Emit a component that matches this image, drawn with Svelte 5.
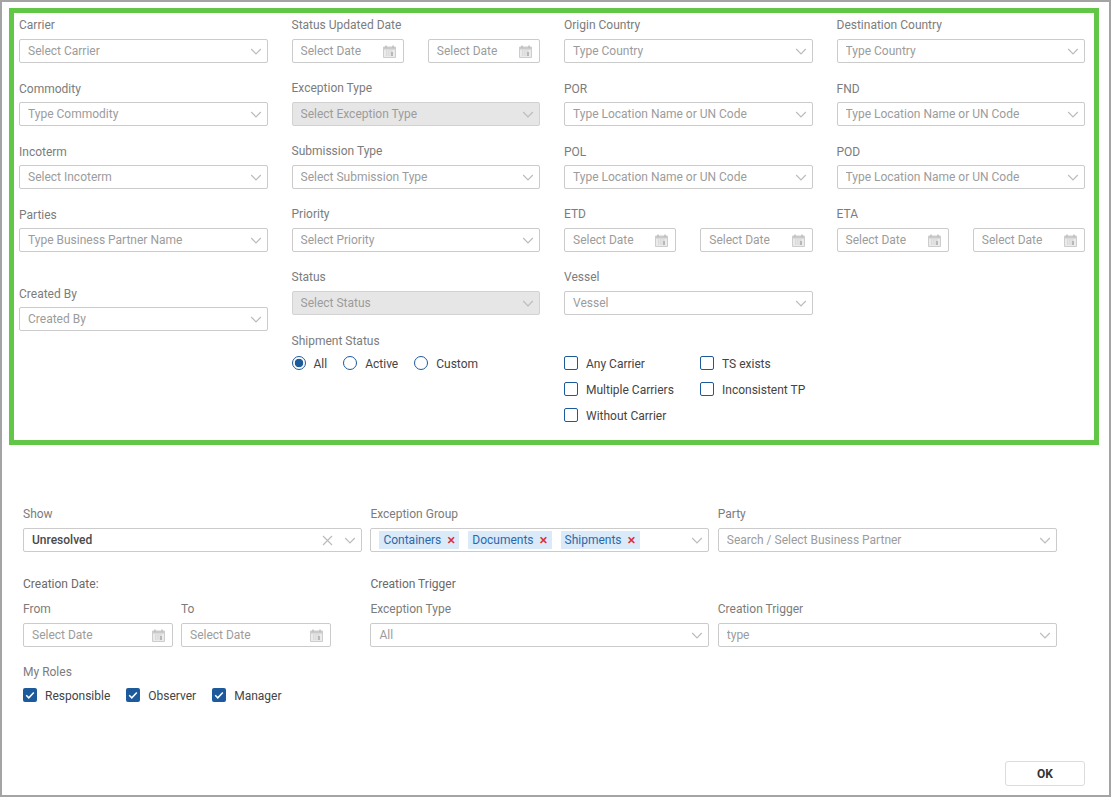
<script lang="ts">
	const filterColumns = [
		[
			{ label: 'Carrier', placeholder: 'Select Carrier' },
			{ label: 'Commodity', placeholder: 'Type Commodity', low: true },
			{ label: 'Incoterm', placeholder: 'Select Incoterm', low: true },
			{ label: 'Parties', placeholder: 'Type Business Partner Name', low: true },
			{ label: 'Created By', placeholder: 'Created By', low: true, pushed: true }
		],
		[
			{ label: 'Status Updated Date', date: true },
			{ label: 'Exception Type', placeholder: 'Select Exception Type', disabled: true },
			{ label: 'Submission Type', placeholder: 'Select Submission Type' },
			{ label: 'Priority', placeholder: 'Select Priority' },
			{ label: 'Status', placeholder: 'Select Status', disabled: true }
		],
		[
			{ label: 'Origin Country', placeholder: 'Type Country' },
			{ label: 'POR', placeholder: 'Type Location Name or UN Code', low: true },
			{ label: 'POL', placeholder: 'Type Location Name or UN Code', low: true },
			{ label: 'ETD', date: true },
			{ label: 'Vessel', placeholder: 'Vessel' }
		],
		[
			{ label: 'Destination Country', placeholder: 'Type Country' },
			{ label: 'FND', placeholder: 'Type Location Name or UN Code', low: true },
			{ label: 'POD', placeholder: 'Type Location Name or UN Code', low: true },
			{ label: 'ETA', date: true }
		]
	];

	const radios = ['All', 'Active', 'Custom'];
	const carrierChecks = ['Any Carrier', 'TS exists', 'Multiple Carriers', 'Inconsistent TP', 'Without Carrier'];
	const chips = ['Containers', 'Documents', 'Shipments'];
	const roles = ['Responsible', 'Observer', 'Manager'];
</script>

{#snippet chevron()}
	<svg class="chevron" width="12" height="7" viewBox="0 0 12 7" fill="none" stroke="#bcbcbc" stroke-width="1.2">
		<path d="M1.2 1l4.8 4.8 4.8-4.8" />
	</svg>
{/snippet}

{#snippet select(placeholder, disabled = false)}
	<div class="input" class:disabled>
		<span class="placeholder">{placeholder}</span>
		{@render chevron()}
	</div>
{/snippet}

{#snippet dateInput()}
	<div class="input date">
		<span class="placeholder">Select Date</span>
		<svg class="calendar" width="13" height="13" viewBox="0 0 13 13">
			<path d="M0.5 2h12v10.5h-12z" fill="#ebebeb" stroke="#cdcdcd" />
			<path d="M1 2h11v2.5H1z" fill="#cacaca" />
			<path d="M3 0.5v2.5M10 0.5v2.5" stroke="#bdbdbd" stroke-width="1.4" />
			<path d="M3 6h7M3 8h7M3 10h7" stroke="#c8c8c8" stroke-dasharray="1.4 0.8" />
			<path d="M8 7h2v4H8z" fill="#b8b8b8" />
		</svg>
	</div>
{/snippet}

{#snippet checkbox(label, checked = false)}
	<label class="check">
		<span class="box" class:checked>
			{#if checked}
				<svg width="14" height="14" viewBox="0 0 14 14" fill="none" stroke="#fff" stroke-width="1.5">
					<path d="M3.2 7.2l2.6 2.6 5-5.4" />
				</svg>
			{/if}
		</span>
		{label}
	</label>
{/snippet}

<div class="window">
	<section class="filters">
		{#each filterColumns as column, i}
			<div class="column">
				{#each column as field}
					<div class="field" class:low={field.low} class:pushed={field.pushed}>
						<span class="label">{field.label}</span>
						{#if field.date}
							<div class="date-pair">
								{@render dateInput()}
								{@render dateInput()}
							</div>
						{:else}
							{@render select(field.placeholder, field.disabled)}
						{/if}
					</div>
				{/each}

				{#if i === 1}
					<div class="field shipment">
						<span class="label">Shipment Status</span>
						<div class="radios">
							{#each radios as radio, r}
								<label class="check">
									<span class="radio" class:on={r === 0}></span>
									{radio}
								</label>
							{/each}
						</div>
					</div>
				{/if}

				{#if i === 2}
					<div class="carrier-checks">
						{#each carrierChecks as item}
							{@render checkbox(item)}
						{/each}
					</div>
				{/if}
			</div>
		{/each}
	</section>

	<section class="details">
		<div class="detail-row">
			<div class="field">
				<span class="label">Show</span>
				<div class="input">
					<span class="value">Unresolved</span>
					<svg class="clear" width="11" height="11" viewBox="0 0 11 11" fill="none" stroke="#bcbcbc" stroke-width="1.2">
						<path d="M1 1l9 9M10 1l-9 9" />
					</svg>
					{@render chevron()}
				</div>
			</div>
			<div class="field">
				<span class="label">Exception Group</span>
				<div class="input">
					<div class="chips">
						{#each chips as chip}
							<span class="chip">{chip}<span class="chip-x">×</span></span>
						{/each}
					</div>
					{@render chevron()}
				</div>
			</div>
			<div class="field">
				<span class="label">Party</span>
				{@render select('Search / Select Business Partner')}
			</div>
		</div>

		<div class="detail-row second">
			<div class="field">
				<span class="label heading">Creation Date:</span>
				<div class="range">
					<div class="field">
						<span class="label">From</span>
						{@render dateInput()}
					</div>
					<div class="field">
						<span class="label">To</span>
						{@render dateInput()}
					</div>
				</div>
			</div>
			<div class="field">
				<span class="label heading">Creation Trigger</span>
				<div class="field">
					<span class="label">Exception Type</span>
					{@render select('All')}
				</div>
			</div>
			<div class="field">
				<span class="label heading">&nbsp;</span>
				<div class="field">
					<span class="label">Creation Trigger</span>
					{@render select('type')}
				</div>
			</div>
		</div>

		<div class="roles-block">
			<span class="label">My Roles</span>
			<div class="roles">
				{#each roles as role}
					{@render checkbox(role, true)}
				{/each}
			</div>
		</div>
	</section>

	<footer class="footer">
		<button class="ok" type="button">OK</button>
	</footer>
</div>

<style>
	:global(body) {
		margin: 0;
		background: #fff;
	}

	.window {
		box-sizing: border-box;
		display: flex;
		flex-direction: column;
		height: 797px;
		border: 2px solid #a4a4a4;
		padding-top: 6px;
		font-family: Roboto, 'Liberation Sans', sans-serif;
		font-size: 12px;
		color: #444;
	}

	.filters {
		box-sizing: border-box;
		display: grid;
		grid-template-columns: repeat(4, 1fr);
		column-gap: 24px;
		width: 1090px;
		height: 437px;
		margin-left: 7px;
		border: 5px solid #62c646;
		padding: 3px 9px 0 5px;
	}

	.column {
		display: flex;
		flex-direction: column;
		gap: 16px;
		min-width: 0;
	}

	.field {
		display: flex;
		flex-direction: column;
		gap: 7px;
		min-width: 0;
	}

	.field.low {
		gap: 6px;
		padding-top: 1px;
	}

	.field.pushed {
		margin-top: 16px;
	}

	.field.shipment {
		margin-top: 1px;
	}

	.label {
		height: 16px;
		line-height: 18px;
		color: #7c7c7c;
		white-space: nowrap;
	}

	.input {
		box-sizing: border-box;
		display: flex;
		align-items: center;
		height: 24px;
		padding: 0 5px 0 8px;
		border: 1px solid #cbcbcb;
		border-radius: 2px;
		background: #fff;
	}

	.input.disabled {
		background: #e6e6e6;
		border-color: #d2d2d2;
	}

	.placeholder {
		flex: 1;
		color: #9c9c9c;
		white-space: nowrap;
		overflow: hidden;
	}

	.value {
		flex: 1;
		color: #4a4a4a;
		font-weight: 500;
	}

	.chevron {
		flex: none;
	}

	.clear {
		flex: none;
		margin-right: 11px;
	}

	.date-pair {
		display: grid;
		grid-template-columns: 1fr 1fr;
		column-gap: 24px;
	}

	.calendar {
		flex: none;
		margin-right: 2px;
	}

	.radios {
		display: flex;
		gap: 16px;
		margin-top: 1px;
	}

	.check {
		display: flex;
		align-items: flex-start;
		gap: 8px;
		height: 14px;
		line-height: 16px;
		color: #444;
		white-space: nowrap;
	}

	.radio {
		box-sizing: border-box;
		flex: none;
		width: 14px;
		height: 14px;
		border: 1px solid #1d5a9c;
		border-radius: 50%;
		background: #fff;
	}

	.radio.on {
		background: radial-gradient(circle, #1d5a9c 0 4px, #fff 4.6px);
	}

	.carrier-checks {
		display: grid;
		grid-template-columns: 136px 1fr;
		row-gap: 12px;
		margin-top: 25px;
	}

	.box {
		box-sizing: border-box;
		flex: none;
		width: 14px;
		height: 14px;
		border: 1px solid #1d5a9c;
		border-radius: 2px;
		background: #fff;
	}

	.box.checked {
		border: 0;
		background: #1d5a9c;
	}

	.box svg {
		display: block;
	}

	.details {
		display: flex;
		flex-direction: column;
		width: 1034px;
		margin: 60px 0 0 21px;
	}

	.detail-row {
		display: grid;
		grid-template-columns: repeat(3, 339px);
		column-gap: 8.4px;
	}

	.detail-row.second {
		margin-top: 23px;
	}

	.heading {
		color: #6a6a6a;
		margin-bottom: 2px;
	}

	.chips {
		display: flex;
		flex: 1;
		gap: 9px;
	}

	.chip {
		display: flex;
		align-items: center;
		gap: 6px;
		height: 18px;
		padding: 0 4px;
		background: #dbeaf8;
		color: #2a68ad;
	}

	.chip-x {
		color: #dc2c35;
		font-size: 15px;
		font-weight: 500;
		line-height: 18px;
	}

	.range {
		display: grid;
		grid-template-columns: 150px 150px;
		column-gap: 8px;
	}

	.roles-block {
		display: flex;
		flex-direction: column;
		gap: 9px;
		margin-top: 16px;
	}

	.roles {
		display: flex;
		gap: 16px;
	}

	.footer {
		display: flex;
		justify-content: flex-end;
		margin-top: auto;
		padding: 0 24px 9px 0;
	}

	.ok {
		width: 80px;
		height: 25px;
		padding: 0;
		border: 1px solid #dcdcdc;
		border-radius: 3px;
		background: #fff;
		color: #333;
		font: 700 12px Roboto, 'Liberation Sans', sans-serif;
	}
</style>
